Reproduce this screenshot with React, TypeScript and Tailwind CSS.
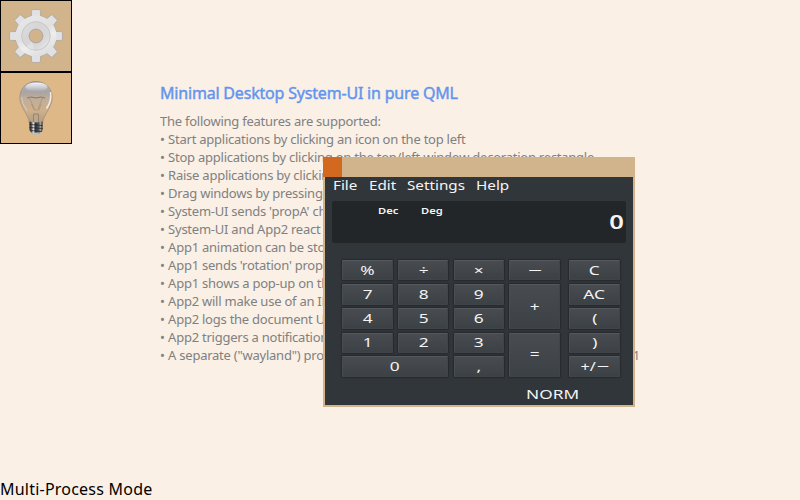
import React from 'react';

const FEATURES = [
  '• Start applications by clicking an icon on the top left',
  '• Stop applications by clicking on the top/left window decoration rectangle',
  '• Raise applications by clicking',
  '• Drag windows by pressing',
  "• System-UI sends 'propA' change",
  '• System-UI and App2 react',
  '• App1 animation can be stopped',
  "• App1 sends 'rotation' property",
  '• App1 shows a pop-up on the',
  '• App2 will make use of an IPC',
  '• App2 logs the document URL',
  '• App2 triggers a notification',
];

function Gear() {
  const teeth = [0, 45, 90, 135, 180, 225, 270, 315];
  return (
    <svg className="size-[70px]" viewBox="0 0 70 70">
      <defs>
        <linearGradient id="metal" gradientUnits="userSpaceOnUse" x1="20" y1="8" x2="48" y2="62">
          <stop offset="0" stopColor="#ebebec" />
          <stop offset=".45" stopColor="#e0e0e1" />
          <stop offset=".6" stopColor="#eeeeef" />
          <stop offset="1" stopColor="#d3d3d5" />
        </linearGradient>
        <linearGradient id="disc" x1="0" y1="0" x2="1" y2="1">
          <stop offset="0" stopColor="#dededf" />
          <stop offset=".35" stopColor="#d6d6d7" />
          <stop offset=".7" stopColor="#d9d9da" />
          <stop offset="1" stopColor="#eeeeee" />
        </linearGradient>
      </defs>
      <g stroke="#b3aca2" strokeWidth="1">
        {teeth.map((a) => (
          <path key={a} d="M30 17 L31 9.200 Q31.200 8.600 32 8.600 H38 Q38.800 8.600 39 9.200 L40 17Z" fill="#e0e0e0" transform={`rotate(${a} 35 35)`} />
        ))}
        <circle cx="35" cy="35" r="20.800" fill="#dddddd" />
      </g>
      <g fill="#e1e1e3">
        {teeth.map((a) => (
          <path key={a} d="M30.400 19 L31.400 9.200 H38.600 L39.600 19Z" transform={`rotate(${a} 35 35)`} />
        ))}
      </g>
      <circle cx="35" cy="35" r="20.400" fill="url(#metal)" />
      <circle cx="35" cy="35" r="14.300" fill="url(#disc)" stroke="#c4c4c6" strokeWidth=".9" />
      <path d="M31 41 L25 46 A14 14 0 0 0 33 49Z" fill="#f3f3f3" opacity=".35" />
      <circle cx="35" cy="35" r="6.900" fill="#d2b48c" stroke="#aaa7a2" strokeWidth="1" />
    </svg>
  );
}

function Bulb() {
  return (
    <svg className="size-[70px]" viewBox="0 0 70 70">
      <defs>
        <linearGradient id="glass" x1="0" y1="0" x2="0" y2="1">
          <stop offset="0" stopColor="#8b8b92" />
          <stop offset=".12" stopColor="#b0b1b9" />
          <stop offset=".25" stopColor="#a9a4a4" />
          <stop offset=".4" stopColor="#c0ad99" />
          <stop offset=".7" stopColor="#cfb18b" />
          <stop offset="1" stopColor="#b49b7e" />
        </linearGradient>
        <linearGradient id="shine" x1="0" y1="0" x2="0" y2="1">
          <stop offset="0" stopColor="#ffffff" stopOpacity=".95" />
          <stop offset="1" stopColor="#e6e8f2" stopOpacity="0" />
        </linearGradient>
        <linearGradient id="screw" x1="0" y1="0" x2="1" y2="0">
          <stop offset="0" stopColor="#1f2021" />
          <stop offset=".15" stopColor="#55585a" />
          <stop offset=".3" stopColor="#eeeeee" />
          <stop offset=".45" stopColor="#303234" />
          <stop offset=".7" stopColor="#55585a" />
          <stop offset=".85" stopColor="#a5a7a8" />
          <stop offset="1" stopColor="#202122" />
        </linearGradient>
      </defs>
      <path d="M35 8.500 C25.500 8.500 18.800 15.500 18.800 24.500 C18.800 30 21.500 34.500 24 39 C27 44 27.500 46 28.500 50 H41.500 C42.500 46 43 44 46 39 C48.500 34.500 51.200 30 51.200 24.500 C51.200 15.500 44.500 8.500 35 8.500Z" fill="url(#glass)" stroke="#8f8780" strokeWidth=".6" />
      <ellipse cx="35.500" cy="14" rx="11" ry="4.500" fill="url(#shine)" />
      <path d="M20.500 24 Q20.500 30 26 37.500" fill="none" stroke="#dbd0c6" strokeWidth=".9" />
      <path d="M49.500 19 Q51 28 45.500 35.500" fill="none" stroke="#f1ece6" strokeWidth="1.500" />
      <path d="M26 25 L30 24 L35 25 L40 24 L44 25" fill="none" stroke="#776c65" strokeWidth=".8" />
      <path d="M28.500 25 L33.500 36 M41.500 25 L37 36 M30.500 31 L33 37 H38 L40 31" fill="none" stroke="#9b8a79" strokeWidth=".6" />
      <path d="M32.500 41 H37.500 V50 H32.500Z" fill="#bba78d" stroke="#85776a" strokeWidth=".7" />
      <path d="M28.500 48.500 Q35 50.500 41.500 48.500 V57 Q40 60.500 36.500 61 H33.500 Q30 60.500 28.500 57Z" fill="url(#screw)" />
      <path d="M28.500 51.500 L41.500 52.500 M28.500 54.500 L41.500 55.500 M29.500 57.500 L41 58.500" stroke="#242526" strokeWidth=".8" />
      <path d="M31.500 59.500 H38.500 L37 61.500 Q35 62.500 33 61.500Z" fill="#b8bcc1" />
    </svg>
  );
}

function Key({ label, className = '' }: { label: string; className?: string }) {
  const wide = label === '−';
  return (
    <div className={`flex items-center justify-center rounded-[1px] border border-t-[#54595d] border-r-[#414549] border-b-[#404448] border-l-[#494e52] bg-linear-to-b from-[#484c50] to-[#3c4145] text-[13px] leading-none text-[#f4f4f4] shadow-[0_0_1px_1px_#272b2e] ${className}`}>
      {label === '+/−' ? (
        <span className="flex items-center"><span className="inline-block scale-x-[1.25]">+/</span><span className="ml-[5px] inline-block scale-x-[1.7]">−</span></span>
      ) : (
        <span className={wide ? 'inline-block scale-x-[1.9]' : 'inline-block scale-x-[1.33]'}>{label}</span>
      )}
    </div>
  );
}

export default function App() {
  return (
    <div className="relative flex h-[500px] w-[800px] flex-col justify-between overflow-hidden bg-[#faf0e6] font-['Noto_Sans',sans-serif]">
      <div className="flex">
        <div className="flex w-[72px] flex-col">
          <div className="flex size-[72px] border border-black bg-[#d2b48c]"><Gear /></div>
          <div className="flex size-[72px] border border-black bg-[#deb887]"><Bulb /></div>
        </div>
        <div className="ml-[88px] w-[480px] pt-[82px] whitespace-nowrap">
          <h1 className="h-[30px] text-[16px] leading-[22px] tracking-[-0.19px] text-[#6495ed] [-webkit-text-stroke:0.45px_#6495ed]">Minimal Desktop System-UI in pure QML</h1>
          <div className="text-[13px] leading-[18px] tracking-[-0.24px] text-[#808080]">
            <p>The following features are supported:</p>
            {FEATURES.map((f) => <p key={f}><span className="mr-[0.3px]">•</span>{f.slice(1)}</p>)}
            <p className="flex justify-between"><span><span className="mr-[0.3px]">•</span> A separate ("wayland") process</span><span>1</span></p>
          </div>
        </div>
      </div>
      <div className="pb-px text-[16px] leading-[20px] tracking-[0.22px] text-black">Multi-Process Mode</div>

      <section className="absolute top-[157px] left-[323px] flex h-[250px] w-[312px] flex-col bg-[#d2b48c]">
        <header className="flex h-[20px] shrink-0"><div className="w-[19px] bg-[#d2691e]" /></header>
        <div className="mx-[2px] flex h-[228px] flex-col bg-[#31363b] text-[#f4f4f4]">
          <nav className="flex h-[18px] shrink-0 items-center text-[12px] leading-none">
            <span className="ml-[8px] w-[36px]"><span className="inline-block origin-left scale-x-[1.27]">File</span></span>
            <span className="w-[38px]"><span className="inline-block origin-left scale-x-[1.27]">Edit</span></span>
            <span className="w-[69px]"><span className="inline-block origin-left scale-x-[1.27]">Settings</span></span>
            <span><span className="inline-block origin-left scale-x-[1.27]">Help</span></span>
          </nav>
          <div className="mt-[6px] ml-[7px] flex h-[42px] w-[294px] shrink-0 justify-between rounded-[2px] bg-[#232629]">
            <div className="flex pt-[4px] pl-[46px] text-[9px] leading-[11px] font-semibold">
              <span className="w-[43px]"><span className="inline-block origin-left scale-x-[1.24]">Dec</span></span>
              <span><span className="inline-block origin-left scale-x-[1.24]">Deg</span></span>
            </div>
            <span className="mr-[2px] origin-right scale-x-[1.35] text-[19px] leading-[42px] font-semibold">0</span>
          </div>
          <div className="mt-[17px] ml-[17px] flex gap-[9px]">
            <div className="grid grid-cols-[51px_50px_50px_51px] grid-rows-[20px_21px_21px_20px_21px] gap-x-[5.333px] gap-y-[3.500px]">
              <Key label="%" /><Key label="÷" /><Key label="×" /><Key label="−" />
              <Key label="7" /><Key label="8" /><Key label="9" /><Key label="+" className="row-span-2" />
              <Key label="4" /><Key label="5" /><Key label="6" />
              <Key label="1" /><Key label="2" /><Key label="3" /><Key label="=" className="row-span-2" />
              <Key label="0" className="col-span-2" /><Key label="," />
            </div>
            <div className="grid grid-cols-[51px] grid-rows-[20px_21px_21px_20px_21px] gap-y-[3.500px]">
              <Key label="C" /><Key label="AC" /><Key label="(" /><Key label=")" /><Key label="+/−" />
            </div>
          </div>
          <div className="mt-[10px] ml-[201px] text-[13px] leading-[15px]"><span className="inline-block origin-left scale-x-[1.33]">NORM</span></div>
        </div>
      </section>
    </div>
  );
}
